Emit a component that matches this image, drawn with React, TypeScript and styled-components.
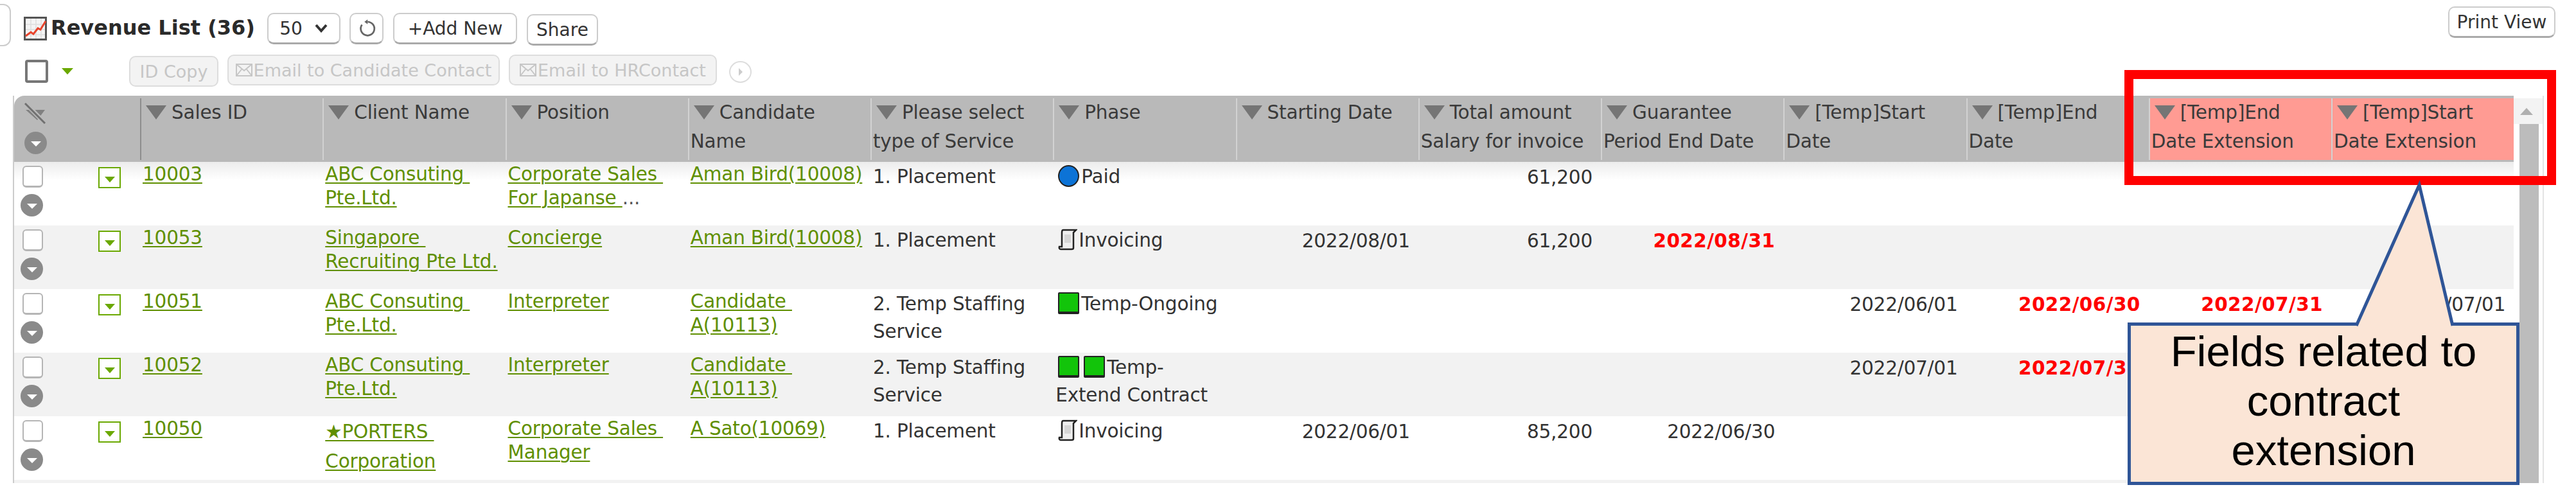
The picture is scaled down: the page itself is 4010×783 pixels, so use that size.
import React from "react";
import styled, { createGlobalStyle } from "styled-components";

const Global = createGlobalStyle`
  html, body { margin: 0; padding: 0; background: #fff; overflow: hidden; }
  body { font-family: "DejaVu Sans", Verdana, sans-serif; color: #333; }
`;

const Page = styled.div`
  position: relative;
  width: 4010px;
  height: 783px;
  overflow: hidden;
`;

const TopBar = styled.div`
  display: flex;
  align-items: flex-start;
  height: 85px;
`;

const Stub = styled.div`
  width: 15px;
  height: 62px;
  margin-top: 6px;
  border: 2px solid #ccc;
  border-left: none;
  border-radius: 0 12px 12px 0;
`;

const ChartSlot = styled.div`
  margin: 26px 6px 0 20px;
  width: 36px;
  height: 37px;
  line-height: 0;
`;

const Title = styled.h1`
  margin: 23px 15px 0 0;
  width: 322px;
  font-size: 32px;
  line-height: 40px;
  font-weight: 700;
  color: #2a2a2a;
  white-space: nowrap;
`;

const Btn = styled.div<{ $w: number; $top?: number }>`
  box-sizing: border-box;
  width: ${(p) => p.$w}px;
  height: 49px;
  margin-top: ${(p) => p.$top ?? 20}px;
  display: flex;
  align-items: center;
  justify-content: center;
  gap: 18px;
  background: #fff;
  border: 2px solid #ccc;
  border-bottom: 3px solid #aaa;
  border-radius: 10px;
  font-size: 28px;
  color: #333;
  white-space: nowrap;
`;

const Gap = styled.div<{ $w: number }>`
  width: ${(p) => p.$w}px;
  flex: none;
`;

const Push = styled.div`
  flex: 1;
`;

const ActionBar = styled.div`
  display: flex;
  align-items: flex-start;
  height: 64px;
`;

const MasterCheck = styled.div`
  box-sizing: border-box;
  width: 36px;
  height: 36px;
  margin: 8px 0 0 39px;
  border: 4px solid #777;
  border-radius: 4px;
  background: #fff;
`;

const GreenDown = styled.div`
  width: 0;
  height: 0;
  margin: 21px 0 0 21px;
  border-left: 9px solid transparent;
  border-right: 9px solid transparent;
  border-top: 10px solid #6aa800;
`;

const GhostBtn = styled.div<{ $w: number; $top: number; $ml: number }>`
  box-sizing: border-box;
  width: ${(p) => p.$w}px;
  height: 48px;
  margin: ${(p) => p.$top}px 0 0 ${(p) => p.$ml}px;
  display: flex;
  align-items: center;
  justify-content: center;
  gap: 2px;
  background: #f3f3f3;
  border: 2px solid #ddd;
  border-radius: 10px;
  font-size: 27px;
  color: #c6c6c6;
  white-space: nowrap;
`;

const PlayRound = styled.div`
  box-sizing: border-box;
  width: 35px;
  height: 34px;
  margin: 10px 0 0 19px;
  border: 2px solid #ddd;
  border-radius: 50%;
  display: flex;
  align-items: center;
  justify-content: center;
  &::after {
    content: "";
    border-left: 6px solid #ccc;
    border-top: 6px solid transparent;
    border-bottom: 6px solid transparent;
  }
`;

const TableWrap = styled.div`
  display: flex;
  width: 3940px;
  margin-left: 20px;
  box-sizing: border-box;
  border-left: 2px solid #ccc;
  border-right: 2px solid #e4e4e4;
`;

const TableMain = styled.div`
  width: 3891px;
  flex: none;
`;

const colTemplate = "196px repeat(13, 284.25px)";

const HeadRow = styled.div`
  display: grid;
  grid-template-columns: ${colTemplate};
  height: 103px;
  box-sizing: border-box;
  padding-top: 4px;
  padding-bottom: 3px;
  background: #b9b9b9;
  border-radius: 16px 0 0 0;
`;

const HeadCorner = styled.div`
  box-sizing: border-box;
  padding: 7px 0 0 16px;
  display: flex;
  flex-direction: column;
  gap: 11px;
`;

const HeadCell = styled.div<{ $hot?: boolean; $dark?: boolean }>`
  box-sizing: border-box;
  padding: 0 0 0 2px;
  background: ${(p) => (p.$hot ? "#ff9b93" : "transparent")};
  border-left: 2px solid ${(p) => (p.$dark ? "#8d8d8d" : "#d2d2d2")};
  font-size: 29.5px;
  line-height: 45px;
  letter-spacing: -0.2px;
  color: #3a3a3a;
  white-space: pre-line;
`;

const SortMark = styled.span`
  display: inline-block;
  width: 0;
  height: 0;
  margin: 0 8px 0 5px;
  border-left: 16px solid transparent;
  border-right: 16px solid transparent;
  border-top: 22px solid #757575;
  vertical-align: -1px;
`;

const Row = styled.div<{ $even: boolean; $first: boolean }>`
  display: grid;
  grid-template-columns: ${colTemplate};
  height: 99px;
  background: ${(p) =>
    p.$first ? "linear-gradient(#ececec, #fff 28px)" : p.$even ? "#f2f2f2" : "#fff"};
`;

const SelectCell = styled.div`
  display: flex;
  align-items: flex-start;
  padding-left: 10px;
`;

const SelectStack = styled.div`
  display: flex;
  flex-direction: column;
  align-items: flex-start;
  gap: 10px;
  padding-top: 6px;
`;

const RowCheck = styled.div`
  box-sizing: border-box;
  width: 32px;
  height: 34px;
  margin-left: 3px;
  background: #fff;
  border: 2px solid #b5b5b5;
  border-bottom-width: 3px;
  border-radius: 6px;
`;

const RoundDown = styled.div`
  width: 35px;
  height: 35px;
  border-radius: 50%;
  background: #8a8a8a;
  display: flex;
  align-items: center;
  justify-content: center;
  &::after {
    content: "";
    margin-top: 3px;
    border-left: 8px solid transparent;
    border-right: 8px solid transparent;
    border-top: 8px solid #fff;
  }
`;

const GreenBox = styled.div`
  box-sizing: border-box;
  width: 35px;
  height: 33px;
  margin: 8px 0 0 86px;
  background: #fff;
  border: 2px solid #6aa800;
  display: flex;
  align-items: center;
  justify-content: center;
  &::after {
    content: "";
    margin-top: 6px;
    border-left: 8px solid transparent;
    border-right: 8px solid transparent;
    border-top: 9px solid #6aa800;
  }
`;

const Cell = styled.div<{ $right?: boolean }>`
  box-sizing: border-box;
  padding: ${(p) => (p.$right ? "3px 13px 0 0" : "2px 0 0 4px")};
  text-align: ${(p) => (p.$right ? "right" : "left")};
  font-size: 29.5px;
  line-height: 43px;
  letter-spacing: -0.2px;
  color: #333;
  white-space: pre-line;
`;

const RedDate = styled.span`
  color: #f00;
  font-weight: 700;
  letter-spacing: 0.4px;
`;

const LinkCell = styled.div<{ $tall?: boolean }>`
  box-sizing: border-box;
  padding: 1px 0 0 4px;
  font-size: 29.5px;
  line-height: ${(p) => (p.$tall ? 46 : 37)}px;
  letter-spacing: -0.2px;
  white-space: pre-line;
  color: #5f8f00;
`;

const Lnk = styled.span`
  text-decoration: underline;
  text-decoration-thickness: 2px;
  text-underline-offset: 3px;
  color: #5f8f00;
`;

const Muted = styled.span`
  color: #555;
`;

const PhaseLine = styled.div`
  line-height: 43px;
`;

const PhaseIcon = styled.span<{ $shape: "dot" | "square" }>`
  display: inline-block;
  box-sizing: border-box;
  width: 33px;
  height: 34px;
  margin: 0 3px 0 4px;
  vertical-align: -6px;
  background: ${(p) => (p.$shape === "dot" ? "#0c73d6" : "#12c40a")};
  border: 2px solid #222;
  border-bottom-width: ${(p) => (p.$shape === "dot" ? 2 : 4)}px;
  border-radius: ${(p) => (p.$shape === "dot" ? "50%" : "2px")};
`;

const ScrollIcon = styled.svg`
  width: 30px;
  height: 34px;
  margin: 0 2px 0 4px;
  vertical-align: -6px;
`;

const TableEnd = styled.div`
  height: 5px;
  background: #f2f2f2;
`;

const ScrollBar = styled.div`
  width: 45px;
  flex: none;
  display: flex;
  flex-direction: column;
  align-items: stretch;
  padding-top: 4px;
  background: #fff;
`;

const ScrollTop = styled.div`
  height: 40px;
  background: #f3f3f3;
  display: flex;
  align-items: center;
  justify-content: center;
  padding-right: 6px;
  &::after {
    content: "";
    border-left: 10px solid transparent;
    border-right: 10px solid transparent;
    border-bottom: 11px solid #b0b0b0;
  }
`;

const ScrollThumb = styled.div`
  flex: 1;
  margin: 0 6px 0 9px;
  background: #bcbcbc;
`;

const RedFrame = styled.div`
  position: absolute;
  left: 3307px;
  top: 109px;
  width: 672px;
  height: 179px;
  box-sizing: border-box;
  border: 14px solid #f00;
  pointer-events: none;
`;

const CalloutTail = styled.svg`
  position: absolute;
  left: 3650px;
  top: 280px;
  width: 190px;
  height: 232px;
  z-index: 2;
`;

const CalloutBox = styled.div`
  position: absolute;
  left: 3312px;
  top: 502px;
  width: 610px;
  height: 253px;
  box-sizing: border-box;
  padding-top: 1px;
  background: #fbe5d6;
  border: 5px solid #2f5597;
  font-family: "Liberation Sans", Arial, sans-serif;
  font-size: 67px;
  line-height: 77px;
  text-align: center;
  color: #000;
  z-index: 1;
`;

const ChartIcon = () => (
  <svg width="36" height="37" viewBox="0 0 36 37">
    <rect x="1.5" y="1.5" width="33" height="34" fill="#f4f4f4" stroke="#555" strokeWidth="3" />
    <path d="M3 12H33M3 20H33M3 28H33M11 3V34M19 3V34M27 3V34" stroke="#ddd" strokeWidth="1.5" />
    <path d="M3 30L11 24L15 27L22 18L26 20L34 7" fill="none" stroke="#e8442c" strokeWidth="3" />
  </svg>
);

const RefreshIcon = () => (
  <svg width="30" height="30" viewBox="0 0 24 24" fill="none" stroke="#666" strokeWidth="2.2">
    <path d="M13 4a8.5 8.5 0 1 1-7 3.6" />
    <path d="M13 1v6l-4-3z" fill="#666" stroke="none" />
  </svg>
);

const ChevronIcon = () => (
  <svg width="22" height="16" viewBox="0 0 22 16" fill="none" stroke="#333" strokeWidth="4">
    <path d="M3 3l8 9 8-9" />
  </svg>
);

const MailIcon = () => (
  <svg width="26" height="22" viewBox="0 0 26 22" fill="none" stroke="#c6c6c6" strokeWidth="2">
    <rect x="1" y="2" width="24" height="18" />
    <path d="M1 2l12 10L25 2M1 20l8-10M25 20l-8-10" />
  </svg>
);

const NoFilterIcon = () => (
  <svg width="34" height="34" viewBox="0 0 34 34">
    <path d="M2 11L32 11L20 27z" fill="#808080" />
    <path d="M2 1L32 32" stroke="#b9b9b9" strokeWidth="7" />
    <path d="M1 1L32 32" stroke="#707070" strokeWidth="3" />
  </svg>
);

const Scroll = () => (
  <ScrollIcon viewBox="0 0 30 34">
    <path d="M8 2H28L24 6V30Q24 32 21 32H5Q1 32 2 28H6V6Q6 2 8 2z" fill="#eee" stroke="#222" strokeWidth="2.5" />
    <path d="M10 9H20V22H10z" fill="#d6d6d6" />
  </ScrollIcon>
);

const columns = [
  { t: "Sales ID" },
  { t: "Client Name" },
  { t: "Position" },
  { t: "Candidate\nName" },
  { t: "Please select\ntype of Service" },
  { t: "Phase" },
  { t: "Starting Date" },
  { t: "Total amount\nSalary for invoice" },
  { t: "Guarantee\nPeriod End Date" },
  { t: "[Temp]Start\nDate" },
  { t: "[Temp]End\nDate" },
  { t: "[Temp]End\nDate Extension", hot: true },
  { t: "[Temp]Start\nDate Extension", hot: true },
];

type RowData = {
  id: string;
  client: string;
  tall?: boolean;
  pos: string;
  more?: boolean;
  cand: string;
  service: string;
  phase: React.ReactNode;
  start?: string;
  total?: string;
  guar?: string;
  guarRed?: boolean;
  tStart?: string;
  tEnd?: string;
  extEnd?: string;
  extStart?: string;
};

const rows: RowData[] = [
  {
    id: "10003",
    client: "ABC Consuting\u00a0\nPte.Ltd.",
    pos: "Corporate Sales\u00a0\nFor Japanse\u00a0",
    more: true,
    cand: "Aman Bird(10008)",
    service: "1. Placement",
    phase: <PhaseLine><PhaseIcon $shape="dot" />Paid</PhaseLine>,
    total: "61,200",
  },
  {
    id: "10053",
    client: "Singapore\u00a0\nRecruiting Pte Ltd.",
    pos: "Concierge",
    cand: "Aman Bird(10008)",
    service: "1. Placement",
    phase: <PhaseLine><Scroll />Invoicing</PhaseLine>,
    start: "2022/08/01",
    total: "61,200",
    guar: "2022/08/31",
    guarRed: true,
  },
  {
    id: "10051",
    client: "ABC Consuting\u00a0\nPte.Ltd.",
    pos: "Interpreter",
    cand: "Candidate\u00a0\nA(10113)",
    service: "2. Temp Staffing\nService",
    phase: <PhaseLine><PhaseIcon $shape="square" />Temp-Ongoing</PhaseLine>,
    tStart: "2022/06/01",
    tEnd: "2022/06/30",
    extEnd: "2022/07/31",
    extStart: "2022/07/01",
  },
  {
    id: "10052",
    client: "ABC Consuting\u00a0\nPte.Ltd.",
    pos: "Interpreter",
    cand: "Candidate\u00a0\nA(10113)",
    service: "2. Temp Staffing\nService",
    phase: (
      <>
        <PhaseLine><PhaseIcon $shape="square" /><PhaseIcon $shape="square" />Temp-</PhaseLine>
        <PhaseLine>Extend Contract</PhaseLine>
      </>
    ),
    tStart: "2022/07/01",
    tEnd: "2022/07/31",
  },
  {
    id: "10050",
    client: "★PORTERS\u00a0\nCorporation",
    tall: true,
    pos: "Corporate Sales\u00a0\nManager",
    cand: "A Sato(10069)",
    service: "1. Placement",
    phase: <PhaseLine><Scroll />Invoicing</PhaseLine>,
    start: "2022/06/01",
    total: "85,200",
    guar: "2022/06/30",
  },
];

export default function App() {
  return (
    <Page>
      <Global />
      <TopBar>
        <Stub />
        <ChartSlot><ChartIcon /></ChartSlot>
        <Title>Revenue List (36)</Title>
        <Btn $w={114}>50<ChevronIcon /></Btn>
        <Gap $w={14} />
        <Btn $w={53}><RefreshIcon /></Btn>
        <Gap $w={15} />
        <Btn $w={193}>+Add New</Btn>
        <Gap $w={15} />
        <Btn $w={111} $top={22}>Share</Btn>
        <Push />
        <Btn $w={167} $top={10}>Print View</Btn>
        <Gap $w={32} />
      </TopBar>
      <ActionBar>
        <MasterCheck />
        <GreenDown />
        <GhostBtn $w={139} $top={2} $ml={87}>ID Copy</GhostBtn>
        <GhostBtn $w={424} $top={0} $ml={14}><MailIcon />Email to Candidate Contact</GhostBtn>
        <GhostBtn $w={324} $top={0} $ml={14}><MailIcon />Email to HRContact</GhostBtn>
        <PlayRound />
      </ActionBar>
      <TableWrap>
        <TableMain>
          <HeadRow>
            <HeadCorner>
              <NoFilterIcon />
              <RoundDown />
            </HeadCorner>
            {columns.map((c, i) => (
              <HeadCell key={c.t} $hot={c.hot} $dark={i === 0}>
                <SortMark />
                {c.t}
              </HeadCell>
            ))}
          </HeadRow>
          {rows.map((r, i) => (
            <Row key={r.id} $even={i % 2 === 1} $first={i === 0}>
              <SelectCell>
                <SelectStack>
                  <RowCheck />
                  <RoundDown />
                </SelectStack>
                <GreenBox />
              </SelectCell>
              <LinkCell><Lnk>{r.id}</Lnk></LinkCell>
              <LinkCell $tall={r.tall}><Lnk>{r.client}</Lnk></LinkCell>
              <LinkCell><Lnk>{r.pos}</Lnk>{r.more && <Muted>...</Muted>}</LinkCell>
              <LinkCell><Lnk>{r.cand}</Lnk></LinkCell>
              <Cell>{r.service}</Cell>
              <Cell>{r.phase}</Cell>
              <Cell $right>{r.start}</Cell>
              <Cell $right>{r.total}</Cell>
              <Cell $right>{r.guarRed ? <RedDate>{r.guar}</RedDate> : r.guar}</Cell>
              <Cell $right>{r.tStart}</Cell>
              <Cell $right>{r.tEnd && <RedDate>{r.tEnd}</RedDate>}</Cell>
              <Cell $right>{r.extEnd && <RedDate>{r.extEnd}</RedDate>}</Cell>
              <Cell $right>{r.extStart}</Cell>
            </Row>
          ))}
          <TableEnd />
        </TableMain>
        <ScrollBar>
          <ScrollTop />
          <ScrollThumb />
        </ScrollBar>
      </TableWrap>
      <RedFrame />
      <CalloutTail viewBox="0 0 190 232">
        <polygon points="18,227 116,8 168,227" fill="#fbe5d6" />
        <path d="M18 227L116 8L168 227" fill="none" stroke="#2f5597" strokeWidth="5" />
      </CalloutTail>
      <CalloutBox>
        Fields related to
        <br />
        contract
        <br />
        extension
      </CalloutBox>
    </Page>
  );
}
